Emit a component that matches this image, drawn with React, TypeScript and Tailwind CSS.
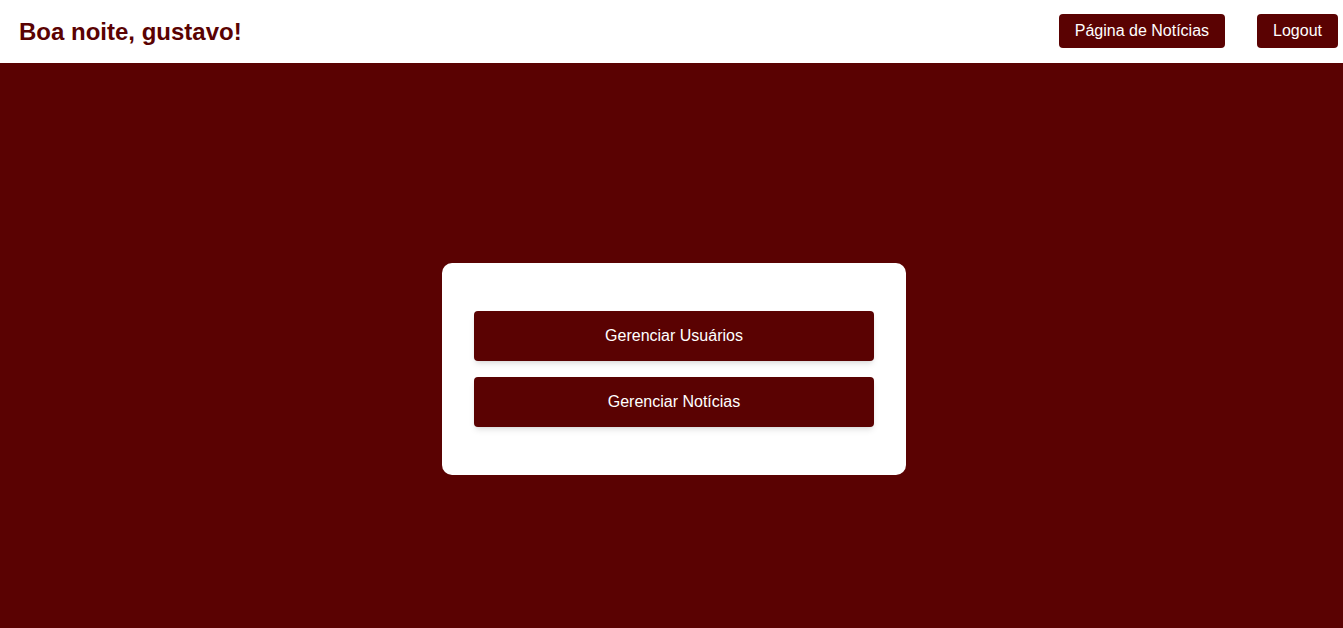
export default function App() {
  return (
    <div className="min-h-screen flex flex-col bg-[#5a0202] font-['Liberation_Sans',Arial,sans-serif]">
      <header className="h-[63px] bg-white flex items-center justify-between pl-[19px] pr-[5px]">
        <h1 className="text-[24px] font-bold text-[#5a0202]">Boa noite, gustavo!</h1>
        <nav className="flex items-center gap-8 -mt-[1px]">
          <button className="h-[34px] px-4 rounded-[4px] bg-[#5a0202] text-white text-[16px]">
            Página de Notícias
          </button>
          <button className="h-[34px] px-4 rounded-[4px] bg-[#5a0202] text-white text-[16px]">
            Logout
          </button>
        </nav>
      </header>

      <main className="flex justify-center pl-[5px] pt-[200px]">
        <div className="w-[464px] bg-white rounded-[10px] px-8 py-12 flex flex-col gap-4">
          <button className="h-[50px] w-full rounded-[4px] bg-[#5a0202] text-white text-[16px] shadow-md">
            Gerenciar Usuários
          </button>
          <button className="h-[50px] w-full rounded-[4px] bg-[#5a0202] text-white text-[16px] shadow-md">
            Gerenciar Notícias
          </button>
        </div>
      </main>
    </div>
  );
}
